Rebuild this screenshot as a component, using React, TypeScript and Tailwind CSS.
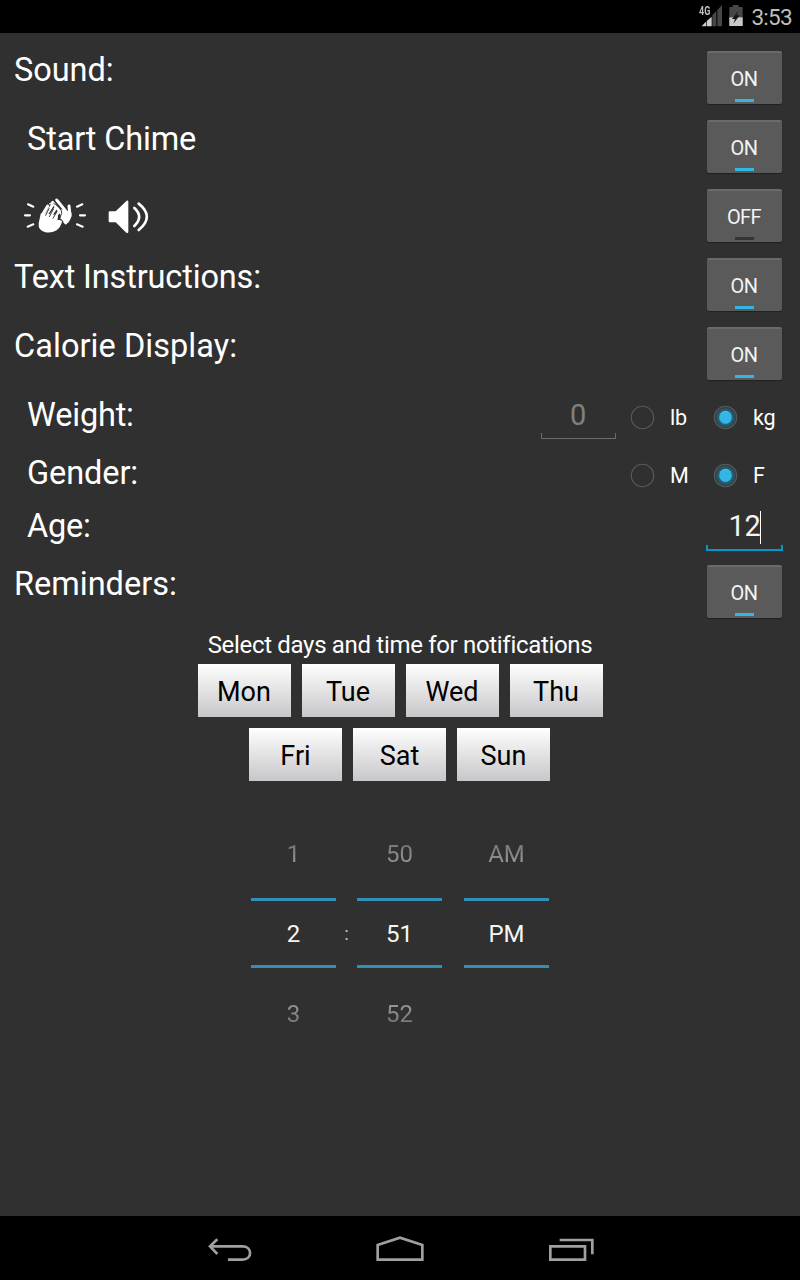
import type { ReactNode } from "react";

function Toggle({ on }: { on: boolean }) {
  return (
    <div className="mt-px flex h-[53px] w-[75px] flex-col items-center rounded-[2px] border-t-2 border-[#6a6a6a] bg-[#5a5a5a] shadow-[0_1px_1px_rgba(0,0,0,0.35)]">
      <span className="h-[46px] pr-px text-[20px] leading-[52px] tracking-[-0.6px] text-[#f3f3f3]">{on ? "ON" : "OFF"}</span>
      <span className={on ? "h-[3px] w-[19px] bg-[#33b5e5]" : "h-[3px] w-[19px] bg-[#343434]"} />
    </div>
  );
}

interface RowProps {
  label: ReactNode;
  indent?: boolean;
  height: string;
  tracking?: string;
  children: ReactNode;
}

function Row({ label, indent, height, tracking = "", children }: RowProps) {
  return (
    <div className={`flex items-start justify-between pr-[18px] ${height} ${indent ? "pl-[27px]" : "pl-[14px]"}`}>
      <div className={`text-[32.5px] leading-[40px] ${tracking}`}>{label}</div>
      {children}
    </div>
  );
}

function Radio({ on, label, width }: { on: boolean; label: string; width: string }) {
  return (
    <div className={`flex h-[45px] items-center ${width}`}>
      <svg width="28" height="28" viewBox="0 0 28 28" className="shrink-0">
        <defs>
          <radialGradient id="glow">
            <stop offset="0.5" stopColor="#1c6f8f" />
            <stop offset="0.75" stopColor="#2b5462" />
            <stop offset="1" stopColor="#303a3e" />
          </radialGradient>
        </defs>
        <circle cx="13.5" cy="13.5" r="11.2" fill={on ? "url(#glow)" : "none"} stroke="#5b5b5b" strokeWidth="1.1" />
        {on && <circle cx="13.5" cy="13.5" r="6.3" fill="#33b5e5" />}
        {on && <path d="M8.3 10.3A6.2 6.2 0 0 1 18.7 10.3" fill="none" stroke="#69c8ea" strokeWidth="0.8" />}
      </svg>
      <span className="ml-[13px] text-[21.5px] leading-[25px] tracking-[-0.3px]">{label}</span>
    </div>
  );
}

function Field({ value, active }: { value: string; active?: boolean }) {
  const size = active ? "h-[45px] w-[77px]" : "h-[44px] w-[75px]";
  const text = active ? "text-[#f3f3f3]" : "pr-px text-[#808080]";
  const line = active ? "border-x-2 border-b-2 border-[#0099cc]" : "border-x border-b border-[#6b6b6b]";
  return (
    <div className={`flex flex-col justify-between ${size}`}>
      <div className={`flex justify-center pt-[3px] text-[29px] leading-[34px] tracking-[-0.3px] ${text}`}>
        {value}
        {active && <span className="-ml-px mt-[2px] h-[33px] w-px bg-white" />}
      </div>
      <div className={`h-[6px] ${line}`} />
    </div>
  );
}

function Day({ name }: { name: string }) {
  return (
    <button className="h-[53px] w-[93px] bg-linear-to-b from-white to-[#c8c6c9] pt-[3px] text-[27px] leading-[50px] text-black">
      {name}
    </button>
  );
}

function Wheel({ before, value, after }: { before: string; value: string; after: string }) {
  return (
    <div className="flex w-[85px] flex-col text-center text-[24px] leading-[28px]">
      <div className="h-[58px] bg-linear-to-b from-[#707070] to-[#a0a0a0] to-50% bg-clip-text text-transparent">{before}</div>
      <div className="h-[70px] border-y-[3px] border-[#338fb8] leading-[66px] text-[#f5f5f5]">{value}</div>
      <div className="mt-[32px] h-[28px] bg-linear-to-b from-[#a0a0a0] to-[#707070] bg-clip-text text-transparent">{after}</div>
    </div>
  );
}

function SoundIcons() {
  return (
    <svg width="150" height="55" viewBox="0 0 450 165" className="-ml-1 mt-[3px]" role="img">
      <g fill="none" stroke="#fff" strokeLinecap="round" strokeLinejoin="round">
        <path d="M54 40l16 7M45 73h15M53 107l17-7M201 47l16-7M210 73h15M201 100l17 7" strokeWidth="6.5" />
        <path d="M120 38l9-3" strokeWidth="5" />
        <path d="M140 27l28 34M128 34l28 36M177 45l3 30" strokeWidth="9" />
        <path d="M156 58l25 8q1 20-14 31l-12-14z" fill="#fff" strokeWidth="7" />
        <path d="M97 72l16-27M108 72l18-28M120 76l18-26M131 82l16-20" strokeWidth="9" />
        <path d="M95 70l46 5-2 16q14-3 14 1-3 15-16 24-13 8-30 5-20-5-18-24z" fill="#fff" strokeWidth="6" />
        <path d="M107 73l10-20M118 77l12-22M129 82l11-19" stroke="#303030" strokeWidth="2.8" />
        <path d="M154 59l1 9-8 17q9-2 12 7" stroke="#303030" strokeWidth="2.8" />
        <path d="M131 37l14 10" stroke="#303030" strokeWidth="2.5" />
      </g>
      <path d="M299 61h18l33-32q5-2 5 3v90q0 6-6 3l-32-31h-18q-3 0-3-4V65q0-4 3-4z" fill="#fff" />
      <path d="M373 51q29 26 0 54M386 38q49 39 0 79" fill="none" stroke="#fff" strokeWidth="8" strokeLinecap="round" />
    </svg>
  );
}

function StatusBar() {
  return (
    <header className="flex h-[33px] justify-end bg-black pr-[8px]">
      <div className="relative h-[33px] w-[52px]">
        <svg width="52" height="33" viewBox="0 0 156 99">
          <path d="M11 79l14-15v15zM27 62l14-12v29H27z" fill="#d0d0d0" />
          <path d="M43 45l12-12v46H43zM58 30l14-15v64H58z" fill="#464646" />
          <path d="M94 21h10v-6h18v6h12v57H94z" fill="#464646" />
          <path d="M94 52h40v26H94z" fill="#c8c8c8" />
          <path d="M121 32l-19 25h9l-5 14 19-25h-9z" fill="#161616" />
        </svg>
        <span className="absolute left-[1px] top-[5px] origin-left scale-x-75 text-[12px] font-bold leading-[12px] text-[#bebebe]">4G</span>
      </div>
      <span className="w-[42px] text-right text-[22.5px] leading-[35px] tracking-[-0.7px] text-[#bebebe]">3:53</span>
    </header>
  );
}

export default function App() {
  return (
    <div className="flex h-[1280px] w-[800px] flex-col overflow-hidden bg-[#303030] font-['Roboto',sans-serif] text-white">
      <StatusBar />
      <main className="flex flex-1 flex-col pt-[17px]">
        <Row label="Sound:" height="h-[69px]" tracking="tracking-[-0.05px]"><Toggle on /></Row>
        <Row label="Start Chime" indent height="h-[69px]" tracking="tracking-[-0.15px]"><Toggle on /></Row>
        <Row label={<SoundIcons />} height="h-[69px]"><Toggle on={false} /></Row>
        <Row label="Text Instructions:" height="h-[69px]" tracking="tracking-[-0.15px]"><Toggle on /></Row>
        <Row label="Calorie Display:" height="h-[69px]" tracking="tracking-[0.05px]"><Toggle on /></Row>
        <Row label="Weight:" indent height="h-[58px]" tracking="tracking-[-0.2px]">
          <div className="-mr-[18px] flex">
            <Field value="0" />
            <div className="ml-[13px] flex">
              <Radio on={false} label="lb" width="w-[83px]" />
              <Radio on label="kg" width="w-[88px]" />
            </div>
          </div>
        </Row>
        <Row label="Gender:" indent height="h-[53px]" tracking="tracking-[-0.1px]">
          <div className="-mr-[18px] flex">
            <Radio on={false} label="M" width="w-[83px]" />
            <Radio on label="F" width="w-[88px]" />
          </div>
        </Row>
        <Row label="Age:" indent height="h-[58px]" tracking="tracking-[-0.2px]">
          <div className="-mr-px"><Field value="12" active /></div>
        </Row>
        <Row label="Reminders:" height="h-[67px]"><Toggle on /></Row>
        <section className="flex flex-col items-center">
          <p className="h-[33px] text-[24px] leading-[28px] tracking-[-0.32px]">Select days and time for notifications</p>
          <div className="flex gap-[11px]">
            {["Mon", "Tue", "Wed", "Thu"].map((d) => <Day key={d} name={d} />)}
          </div>
          <div className="mt-[11px] flex gap-[11px] pr-px">
            {["Fri", "Sat", "Sun"].map((d) => <Day key={d} name={d} />)}
          </div>
          <div className="mt-[59px] flex">
            <Wheel before="1" value="2" after="3" />
            <span className="w-[21px] pt-[83px] text-center text-[19px] leading-[22px] text-[#bebebe]">:</span>
            <Wheel before="50" value="51" after="52" />
            <div className="w-[22px]" />
            <Wheel before="AM" value="PM" after="" />
          </div>
        </section>
      </main>
      <footer className="flex h-[64px] justify-center bg-black">
        <svg width="420" height="64" viewBox="0 18 1260 192" fill="none" stroke="#a0a0a0" strokeWidth="8">
          <path d="M82 88L60 109l22 23M60 109h97c31 0 31 40 0 40h-43" />
          <path d="M563 149v-44l67-22 67 22v44z" />
          <path d="M1081 109h104v40h-104zM1109 90h98v43" />
        </svg>
      </footer>
    </div>
  );
}
